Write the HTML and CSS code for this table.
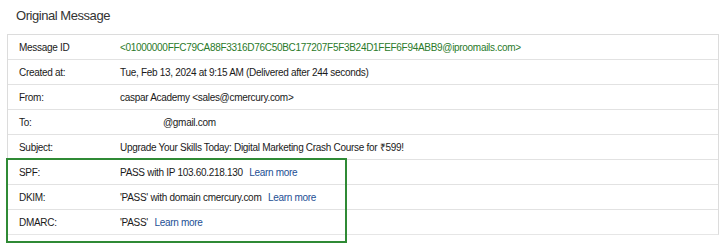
FILE: index.html
```html
<!DOCTYPE html>
<html>
<head>
<meta charset="utf-8">
<link rel="stylesheet" href="styles.css">
</head>
<body>
<div class="page">
  <h1 class="title">Original Message</h1>
  <div class="table">
    <div class="row"><div class="label">Message ID</div><div class="value id">&lt;01000000FFC79CA88F3316D76C50BC177207F5F3B24D1FEF6F94ABB9@iproomails.com&gt;</div></div>
    <div class="row"><div class="label">Created at:</div><div class="value">Tue, Feb 13, 2024 at 9:15 AM (Delivered after 244 seconds)</div></div>
    <div class="row"><div class="label">From:</div><div class="value">caspar Academy &lt;sales@cmercury.com&gt;</div></div>
    <div class="row"><div class="label">To:</div><div class="value"><span class="redact"></span>@gmail.com</div></div>
    <div class="row"><div class="label">Subject:</div><div class="value">Upgrade Your Skills Today: Digital Marketing Crash Course for ₹599!</div></div>
    <div class="row"><div class="label">SPF:</div><div class="value">PASS with IP 103.60.218.130 <a class="link">Learn more</a></div></div>
    <div class="row"><div class="label">DKIM:</div><div class="value">'PASS' with domain cmercury.com <a class="link">Learn more</a></div></div>
    <div class="row"><div class="label">DMARC:</div><div class="value">'PASS' <a class="link">Learn more</a></div></div>
    <div class="highlight"></div>
  </div>
</div>
</body>
</html>
```
FILE: styles.css
```css
* { box-sizing: border-box; }
html, body { margin: 0; padding: 0; background: #fff; }
body { font-family: "Liberation Sans", Arial, sans-serif; color: #1a1a1a; }
.page { width: 725px; height: 250px; padding-top: 6px; }
.title {
  margin: 0 0 9px 16px;
  font-size: 13px;
  letter-spacing: -0.45px;
  font-weight: normal;
  line-height: 19px;
  color: #333;
}
.table {
  position: relative;
  margin-left: 7px;
  width: 712px;
  border: 1px solid #dcdcdc;
  border-bottom: 1px solid #e6e6e6;
}
.row {
  display: grid;
  grid-template-columns: 112px 1fr;
  height: 25px;
  align-items: center;
  font-size: 10px;
  letter-spacing: -0.3px;
  border-top: 1px solid #e2e2e2;
}
.row:first-child { border-top: none; height: 24px; }
.label { padding-left: 11px; }
.value { white-space: nowrap; }
.id { color: #2a7a2a; }
.link { color: #1d4f94; margin-left: 4px; }
.redact { display: inline-block; width: 43px; }
.highlight {
  position: absolute;
  left: -2px;
  top: 123px;
  width: 341px;
  height: 85px;
  border: 2px solid #2f8a35;
}
```
